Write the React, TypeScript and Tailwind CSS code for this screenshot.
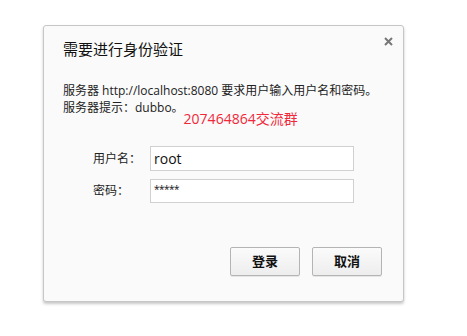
import React from 'react'

const font = { fontFamily: '"Open Sans", "Noto Sans CJK SC", sans-serif' }

const App = () => {
  return (
    <div className="w-[467px] h-[336px] bg-white pl-[43px] pt-[25px]" style={font}>
      <div className="w-[361px] h-[277px] border border-[#c6c6c6] rounded-[3px] bg-[#fafafa] shadow-[0_2px_3px_rgba(0,0,0,0.22)] text-[#222]">
        {/* header */}
        <div className="flex justify-between pl-[19px] pr-[10px] pt-[10px]">
          <div className="mt-[3px] text-[15px] leading-[20px] text-[#111]">需要进行身份验证</div>
          <svg width="9" height="9" viewBox="0 0 9 9" className="mt-[1px]">
            <path d="M1 1 L8 8 M8 1 L1 8" stroke="#777" strokeWidth="2" />
          </svg>
        </div>

        {/* message */}
        <div className="pl-[19px] mt-[23px] text-[12px] leading-[17px]">
          <div>服务器 http://localhost:8080 要求用户输入用户名和密码。</div>
          <div className="flex items-start">
            <span>服务器提示：dubbo。</span>
            <span className="mt-[11px] text-[14px] leading-[17px] text-[#f0283a]">207464864交流群</span>
          </div>
        </div>

        {/* form */}
        <div className="mt-[19px] pl-[49px] flex flex-col gap-[8px] text-[12px]">
          <div className="flex items-center">
            <label className="w-[57px]">用户名：</label>
            <div className="w-[204px] h-[25px] border border-[#d0d0d0] bg-white pl-[3px] text-[14px] leading-[23px] text-[#111]">root</div>
          </div>
          <div className="flex items-center">
            <label className="w-[57px]">密码：</label>
            <div className="w-[204px] h-[24px] border border-[#d0d0d0] bg-white pl-[3px] pt-[2px] text-[10px] leading-[14px] tracking-[-0.5px] text-[#111]">*****</div>
          </div>
        </div>

        {/* buttons */}
        <div className="mt-[44px] flex justify-end gap-[12px] pr-[21px]">
          <button className="w-[70px] h-[29px] rounded-[2px] border border-[#b4b4b4] bg-gradient-to-b from-[#fbfbfb] to-[#ededed] shadow-[0_1px_0_rgba(0,0,0,0.08)] text-[13px] font-semibold text-[#111]">登录</button>
          <button className="w-[70px] h-[29px] rounded-[2px] border border-[#b4b4b4] bg-gradient-to-b from-[#fbfbfb] to-[#ededed] shadow-[0_1px_0_rgba(0,0,0,0.08)] text-[13px] font-semibold text-[#111]">取消</button>
        </div>
      </div>
    </div>
  )
}

export default App
